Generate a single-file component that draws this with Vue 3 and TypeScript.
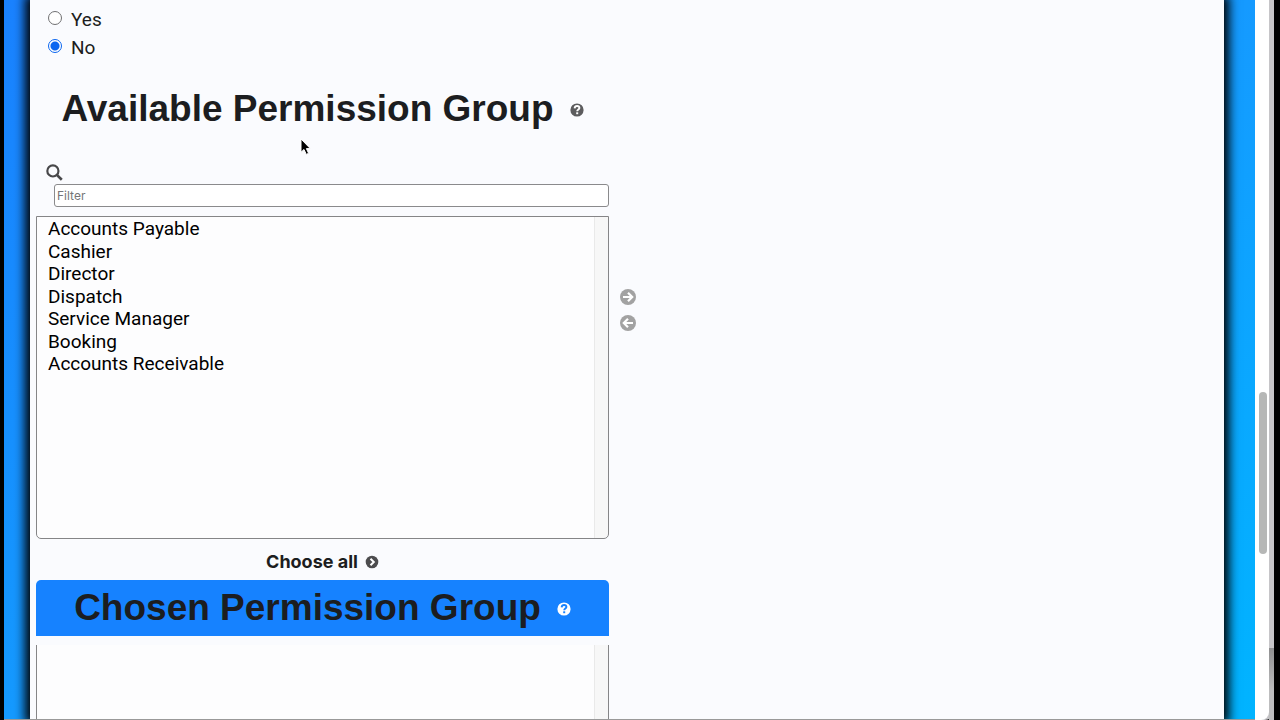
<script setup lang="ts">
import { ref } from 'vue'

const answer = ref<'yes' | 'no'>('no')
const filter = ref('')
const selected = ref<string[]>([])
const groups: string[] = [
  'Accounts Payable',
  'Cashier',
  'Director',
  'Dispatch',
  'Service Manager',
  'Booking',
  'Accounts Receivable',
]
</script>

<template>
  <div class="window">
    <div class="backdrop">
      <main class="panel">
        <div class="radios">
          <label><input v-model="answer" type="radio" name="answer" value="yes" />Yes</label>
          <label><input v-model="answer" type="radio" name="answer" value="no" />No</label>
        </div>

        <div class="selector">
          <section class="column">
            <h2 class="available">
              Available Permission Group
              <svg class="help" viewBox="0 0 14 14" aria-hidden="true">
                <circle cx="7" cy="7" r="6.6" fill="#5c5c5e" />
                <path d="M4.600 5.300C4.800 3.700 5.900 3 7.100 3c1.300 0 2.300.8 2.300 2 0 1.600-2.200 1.600-2.200 3.300" fill="none" stroke="#fff" stroke-width="1.900" />
                <rect x="6.200" y="9.300" width="2" height="1.900" fill="#fff" />
              </svg>
            </h2>

            <div class="filter">
              <label for="group-filter" aria-label="Filter">
                <svg class="search" viewBox="0 0 18 18" aria-hidden="true">
                  <circle cx="7.300" cy="7.300" r="5.900" fill="none" stroke="#48484a" stroke-width="2.300" />
                  <path d="M11.500 11.500L16.700 16.700" stroke="#48484a" stroke-width="2.800" />
                </svg>
              </label>
              <input id="group-filter" v-model="filter" type="text" placeholder="Filter" />
            </div>

            <select v-model="selected" class="list" multiple aria-label="Available Permission Group">
              <option v-for="group in groups" :key="group" :value="group">{{ group }}</option>
            </select>

            <a class="choose-all" href="#">
              Choose all
              <svg viewBox="0 0 14 14" aria-hidden="true">
                <circle cx="7" cy="7" r="6.300" fill="#4c4c4e" />
                <path d="M5.500 3.700L8.800 7l-3.300 3.300" fill="none" stroke="#fff" stroke-width="2" />
              </svg>
            </a>

            <h2 class="chosen">
              Chosen Permission Group
              <svg class="help" viewBox="0 0 14 14" aria-hidden="true">
                <circle cx="7" cy="7" r="6.600" fill="#fff" />
                <path d="M4.600 5.300C4.800 3.700 5.900 3 7.100 3c1.300 0 2.300.8 2.300 2 0 1.600-2.200 1.600-2.200 3.300" fill="none" stroke="#1682ff" stroke-width="1.900" />
                <rect x="6.200" y="9.300" width="2" height="1.900" fill="#1682ff" />
              </svg>
            </h2>
            <select class="list chosen-list" multiple aria-label="Chosen Permission Group"></select>
          </section>

          <div class="transfer">
            <button type="button" aria-label="Choose">
              <svg viewBox="0 0 16 16" aria-hidden="true">
                <circle cx="8" cy="8" r="8" fill="#a2a2a2" />
                <path d="M3 8H11.500M8 3.800L12.200 8 8 12.200" fill="none" stroke="#fff" stroke-width="2.200" />
              </svg>
            </button>
            <button type="button" aria-label="Remove">
              <svg viewBox="0 0 16 16" aria-hidden="true">
                <circle cx="8" cy="8" r="8" fill="#a2a2a2" />
                <path d="M13 8H4.500M8 3.800L3.800 8 8 12.200" fill="none" stroke="#fff" stroke-width="2.200" />
              </svg>
            </button>
          </div>
        </div>
      </main>
    </div>
    <div class="track"><div class="thumb"></div></div>
    <div class="edge"></div>
    <svg class="pointer" viewBox="0 0 14 20" aria-hidden="true">
      <path d="M2 2v13.200l3-2.700 2.300 4.900 2.300-1.100-2.200-4.700h3.900z" fill="#000" stroke="#fff" stroke-width="1" />
    </svg>
  </div>
</template>

<style>
body {
  margin: 0;
  background: #000;
}
</style>

<style scoped>
.window {
  position: relative;
  box-sizing: border-box;
  display: flex;
  height: 100vh;
  padding: 0 6px 0 4px;
  overflow: hidden;
  background: #000;
  color: #1c1d20;
  font: 19px/28px Roboto, "Liberation Sans", sans-serif;
}
.backdrop {
  flex: 1;
  display: flex;
  min-width: 0;
  padding: 0 31px 0 26px;
  overflow: hidden;
  background: linear-gradient(to bottom right, #1a82ff, #159aff 50%, #00b4ff);
  border-bottom: 1px solid #999;
}
.panel {
  flex: 1;
  min-width: 0;
  padding: 6px 6px 0;
  background: #fafbfe;
  box-shadow: 0 0 10px 5px #000;
}
.radios {
  display: flex;
  flex-direction: column;
  padding-left: 12px;
}
.radios label {
  display: flex;
  align-items: center;
  gap: 9px;
}
.radios input {
  appearance: none;
  box-sizing: border-box;
  width: 14px;
  height: 14px;
  margin: 0 0 4px;
  border: 1px solid #707072;
  border-radius: 50%;
  background: #fff;
}
.radios input:checked {
  border-color: #0a66f0;
  background: radial-gradient(circle, #0a66f0 4px, #fff 5px);
}
.selector {
  display: flex;
  gap: 11px;
}
.column {
  display: flex;
  flex-direction: column;
  flex: 0 1 573px;
  min-width: 0;
}
h2 {
  display: flex;
  align-items: center;
  justify-content: center;
  gap: 16px;
  margin: 0;
  font: bold 37px/56px "Liberation Sans", Arial, sans-serif;
}
.help {
  width: 14px;
  height: 14px;
  margin-top: 2px;
}
.available {
  margin-top: 19px;
}
.filter {
  display: flex;
  flex-direction: column;
  margin-top: 27px;
  padding-left: 10px;
}
.filter label {
  height: 20px;
}
.search {
  display: block;
  width: 17px;
  height: 17px;
}
.filter input {
  box-sizing: border-box;
  height: 23px;
  margin-left: 8px;
  padding: 0 2px;
  border: 1px solid #8a8a8c;
  border-radius: 3px;
  background: #fff;
  font: 12px Inter, sans-serif;
}
.filter input::placeholder {
  color: #757577;
}
.list {
  box-sizing: border-box;
  height: 323px;
  margin: 9px 0 0;
  padding: 0;
  overflow: hidden;
  border: 1px solid #858587;
  border-radius: 0 0 5px 5px;
  background: linear-gradient(to left, #f7f7f7 13px, #e9e9e9 13px, #e9e9e9 14px, #fdfdfe 14px);
  color: #000;
  font: 19px Roboto, "Liberation Sans", sans-serif;
  outline: none;
}
.list option {
  box-sizing: border-box;
  height: 22px;
  min-height: 0;
  padding: 0 11px;
  color: #000;
}
.list option:nth-child(odd) {
  height: 23px;
}
.choose-all {
  display: flex;
  align-items: center;
  justify-content: center;
  gap: 7px;
  height: 41px;
  padding-top: 4px;
  box-sizing: border-box;
  color: #1c1d20;
  font-family: Inter, sans-serif;
  font-size: 18px;
  font-weight: 700;
  text-decoration: none;
}
.choose-all svg {
  width: 14px;
  height: 14px;
}
.chosen {
  border-radius: 5px 5px 0 0;
  background: #1682ff;
}
.chosen-list {
  border-top: 0;
}
.transfer {
  display: flex;
  flex-direction: column;
  gap: 10px;
  padding-top: 227px;
}
.transfer button {
  padding: 0;
  border: 0;
  background: none;
}
.transfer svg {
  display: block;
  width: 16px;
  height: 16px;
}
.track {
  display: flex;
  justify-content: flex-end;
  width: 14px;
  border-radius: 0 0 8px 0;
  background: #fff;
  box-shadow: 4px 0 0 #c4c3c6;
}
.thumb {
  width: 8px;
  height: 162px;
  margin: 392px 2px 0 0;
  border-radius: 4px;
  background: #b6b7b6;
}
.edge {
  width: 5px;
  background: linear-gradient(#c6c5c8 90%, #8f8f90 90%, #bdbdbe 96%);
}
.pointer {
  position: absolute;
  top: 137px;
  left: 299px;
  width: 14px;
  height: 20px;
}
</style>
